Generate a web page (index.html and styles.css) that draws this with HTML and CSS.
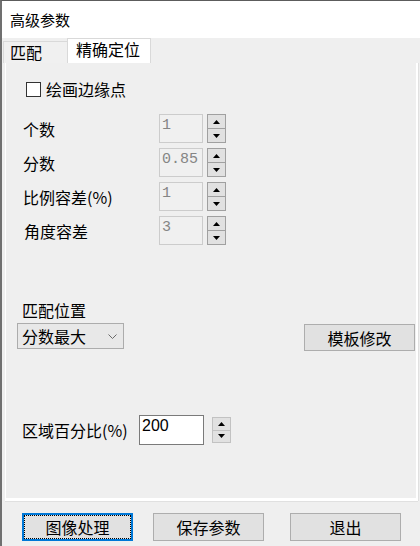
FILE: index.html
```html
<!DOCTYPE html>
<html lang="zh-CN">
<head>
<meta charset="utf-8">
<title>高级参数</title>
<link rel="stylesheet" href="styles.css">
</head>
<body>
<div class="window">
  <div class="titlebar">高级参数</div>
  <div class="tabs">
    <div class="tab">匹配</div>
    <div class="tab active">精确定位</div>
  </div>
  <div class="panel">
    <div class="check"><span class="box"></span><span class="check-text">绘画边缘点</span></div>
    <div class="params">
      <div class="row">
        <span class="lbl">个数</span>
        <div class="num disabled">1</div>
        <div class="spin"><span class="sb"><svg width="7" height="4" viewBox="0 0 7 4"><polygon points="0,4 7,4 3.5,0" fill="#000"/></svg></span><span class="sb"><svg width="7" height="4" viewBox="0 0 7 4"><polygon points="0,0 7,0 3.5,4" fill="#000"/></svg></span></div>
      </div>
      <div class="row">
        <span class="lbl">分数</span>
        <div class="num disabled">0.85</div>
        <div class="spin"><span class="sb"><svg width="7" height="4" viewBox="0 0 7 4"><polygon points="0,4 7,4 3.5,0" fill="#000"/></svg></span><span class="sb"><svg width="7" height="4" viewBox="0 0 7 4"><polygon points="0,0 7,0 3.5,4" fill="#000"/></svg></span></div>
      </div>
      <div class="row">
        <span class="lbl">比例容差(%)</span>
        <div class="num disabled">1</div>
        <div class="spin"><span class="sb"><svg width="7" height="4" viewBox="0 0 7 4"><polygon points="0,4 7,4 3.5,0" fill="#000"/></svg></span><span class="sb"><svg width="7" height="4" viewBox="0 0 7 4"><polygon points="0,0 7,0 3.5,4" fill="#000"/></svg></span></div>
      </div>
      <div class="row">
        <span class="lbl lbl-indent">角度容差</span>
        <div class="num disabled">3</div>
        <div class="spin"><span class="sb"><svg width="7" height="4" viewBox="0 0 7 4"><polygon points="0,4 7,4 3.5,0" fill="#000"/></svg></span><span class="sb"><svg width="7" height="4" viewBox="0 0 7 4"><polygon points="0,0 7,0 3.5,4" fill="#000"/></svg></span></div>
      </div>
    </div>
    <div class="match-label">匹配位置</div>
    <div class="match-row">
      <div class="select"><span>分数最大</span><svg class="chev" width="9" height="5" viewBox="0 0 9 5"><polyline points="0.5,0.5 4.5,4.5 8.5,0.5" fill="none" stroke="#6a6a6a" stroke-width="1"/></svg></div>
      <button class="btn tpl">模板修改</button>
    </div>
    <div class="area-row">
      <span class="area-lbl">区域百分比(%)</span>
      <div class="num active-num">200</div>
      <div class="spin light"><span class="sb"><svg width="7" height="4" viewBox="0 0 7 4"><polygon points="0,4 7,4 3.5,0" fill="#000"/></svg></span><span class="sb"><svg width="7" height="4" viewBox="0 0 7 4"><polygon points="0,0 7,0 3.5,4" fill="#000"/></svg></span></div>
    </div>
  </div>
  <div class="footer">
    <button class="btn fbtn focus">图像处理</button>
    <button class="btn fbtn b2">保存参数</button>
    <button class="btn fbtn b3">退出</button>
  </div>
</div>
</body>
</html>
```
FILE: styles.css
```css
* { box-sizing: border-box; }
html, body { margin: 0; padding: 0; }
body {
  width: 420px;
  height: 546px;
  overflow: hidden;
  background: #efefef;
  font-family: "Noto Sans CJK SC", "Noto Sans", sans-serif;
  color: #000;
}
.window {
  width: 420px;
  height: 546px;
  border-top: 1px solid #5c5c5c;
  border-left: 2px solid #707070;
  background: #efefef;
  display: flex;
  flex-direction: column;
}
.titlebar {
  height: 37px;
  background: #fff;
  font-size: 15px;
  line-height: 37px;
  padding-left: 8px;
  flex: none;
}
.tabs {
  height: 25px;
  display: flex;
  align-items: flex-end;
  padding-left: 1px;
  flex: none;
}
.tab {
  height: 22px;
  width: 64px;
  border-top: 1px solid #d9d9d9;
  border-left: 1px solid #d9d9d9;
  background: #f0f0f0;
  font-size: 16px;
  line-height: 20px;
  padding-left: 6px;
}
.tab.active {
  height: 25px;
  width: 84px;
  background: #fff;
  border: 1px solid #d9d9d9;
  border-bottom: none;
  padding-left: 8px;
  line-height: 20px;
}
.panel {
  margin-left: 3px;
  width: 413px;
  height: 438px;
  border-left: 1px solid #fff;
  border-right: 2px solid #fff;
  border-bottom: 3px solid #fff;
  box-shadow: 1px 0 0 #e0e0e0, 0 1px 0 #e0e0e0;
  background: #efefef;
  display: flex;
  flex-direction: column;
  flex: none;
}
.check {
  margin-top: 19px;
  margin-left: 20px;
  height: 15px;
  display: flex;
  align-items: center;
  font-size: 16px;
  line-height: 15px;
}
.box {
  width: 15px;
  height: 15px;
  border: 1px solid #333;
  background: #fff;
  margin-right: 5px;
  flex: none;
}
.params {
  margin-top: 17px;
  padding-left: 17px;
  display: flex;
  flex-direction: column;
  gap: 5px;
}
.row {
  height: 29px;
  display: flex;
  align-items: center;
}
.lbl {
  width: 136px;
  font-size: 16px;
  line-height: 20px;
  flex: none;
}
.lbl-indent { padding-left: 1px; }
.num {
  width: 44px;
  height: 29px;
  border: 1px solid #cccccc;
  background: #f0f0f0;
  font-family: "Liberation Mono", monospace;
  font-size: 15px;
  line-height: 20px;
  padding: 1px 0 0 2px;
  flex: none;
}
.num.disabled { color: #858585; }
.spin {
  margin-left: 4px;
  width: 19px;
  height: 29px;
  display: flex;
  flex-direction: column;
  flex: none;
}
.sb {
  flex: 1;
  border: 1px solid #a0a0a0;
  background: #e1e1e1;
  display: flex;
  align-items: center;
  justify-content: center;
}
.sb + .sb { border-top: none; }
.sb svg { display: block; }
.match-label {
  margin-top: 55px;
  margin-left: 16px;
  font-size: 16px;
  line-height: 20px;
  height: 20px;
}
.match-row {
  margin-top: 3px;
  height: 28px;
  display: flex;
  align-items: flex-start;
}
.select {
  margin-left: 11px;
  width: 107px;
  height: 26px;
  border: 1px solid #acacac;
  background: #e8e8e8;
  display: flex;
  align-items: center;
  padding-left: 4px;
  font-size: 16px;
  line-height: 20px;
}
.chev { margin-left: 22px; margin-top: 1px; }
.btn {
  font-family: "Noto Sans CJK SC", "Noto Sans", sans-serif;
  font-size: 16px;
  line-height: 20px;
  color: #000;
  background: #e1e1e1;
  border: 1px solid #adadad;
  padding: 0;
  margin: 0;
}
.tpl {
  margin-left: auto;
  margin-right: 1px;
  margin-top: 1px;
  width: 111px;
  height: 27px;
}
.area-row {
  margin-top: 64px;
  height: 30px;
  display: flex;
  align-items: center;
  margin-left: 16px;
}
.area-lbl {
  width: 117px;
  font-size: 16px;
  line-height: 20px;
  flex: none;
}
.active-num {
  width: 65px;
  height: 30px;
  background: #fff;
  border: 1px solid #7a7a7a;
  font-family: "Liberation Sans", sans-serif;
  font-size: 16px;
  color: #000;
  padding: 1px 0 0 2px;
  line-height: 18px;
}
.spin.light {
  margin-left: 8px;
  height: 26px;
}
.spin.light .sb { border-color: #c2c2c2; }
.footer {
  height: 45px;
  display: flex;
  align-items: flex-start;
  padding-top: 12px;
  padding-left: 20px;
  flex: none;
}
.fbtn {
  width: 111px;
  height: 28px;
}
.fbtn.focus {
  border: 2px solid #0078d7;
  outline: 1px dotted #000;
  outline-offset: -3px;
}
.b2 { margin-left: 20px; }
.b3 { margin-left: 26px; }
```
